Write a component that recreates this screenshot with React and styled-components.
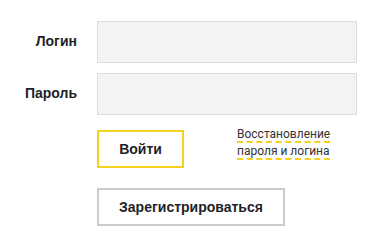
import React from "react";
import styled, { createGlobalStyle } from "styled-components";

const YELLOW = "#f3d11d";
const INK = "#1e1f28";

const GlobalStyle = createGlobalStyle`
  html, body {
    margin: 0;
    padding: 0;
    background: #fff;
    font-family: "Liberation Sans", Arial, sans-serif;
  }
`;

const Form = styled.form`
  display: grid;
  grid-template-columns: 77px 260px;
  column-gap: 20px;
  row-gap: 10px;
  padding-top: 21px;
  align-items: center;
`;

const Label = styled.label`
  text-align: right;
  font-size: 14px;
  font-weight: bold;
  color: ${INK};
  margin-top: -2px;
`;

const Input = styled.input`
  box-sizing: border-box;
  width: 260px;
  height: 42px;
  margin: 0;
  border: 1px solid #dddddd;
  background: #f3f3f3;
  outline: none;
`;

const Actions = styled.div`
  grid-column: 2;
  display: flex;
  flex-direction: column;
  align-items: flex-start;
  gap: 20px;
  margin-top: 5px;
`;

const Row = styled.div`
  display: flex;
  align-items: flex-start;
  gap: 53px;
`;

const Button = styled.button`
  box-sizing: border-box;
  height: 38px;
  width: ${(p) => p.$width}px;
  margin: 0;
  padding: 0;
  background: #fff;
  border: 2px solid ${(p) => (p.$primary ? YELLOW : "#cccccc")};
  font-family: "Liberation Sans", Arial, sans-serif;
  font-size: 14px;
  font-weight: bold;
  color: ${INK};
  cursor: pointer;
`;

const Recover = styled.a`
  margin-top: -4px;
  font-size: 12px;
  line-height: 17px;
  white-space: nowrap;
  color: #333;
  text-decoration: none;
  font-family: Roboto, "Liberation Sans", sans-serif;
`;

const Dashed = styled.span`
  border-bottom: 2px dashed ${YELLOW};
`;

export default function App() {
  return (
    <>
      <GlobalStyle />
      <Form onSubmit={(e) => e.preventDefault()}>
        <Label htmlFor="login">Логин</Label>
        <Input id="login" type="text" />
        <Label htmlFor="pass">Пароль</Label>
        <Input id="pass" type="password" />
        <Actions>
          <Row>
            <Button $primary $width={87}>Войти</Button>
            <Recover href="#">
              <Dashed>Восстановление</Dashed>
              <br />
              <Dashed>пароля и логина</Dashed>
            </Recover>
          </Row>
          <Button $width={188}>Зарегистрироваться</Button>
        </Actions>
      </Form>
    </>
  );
}
